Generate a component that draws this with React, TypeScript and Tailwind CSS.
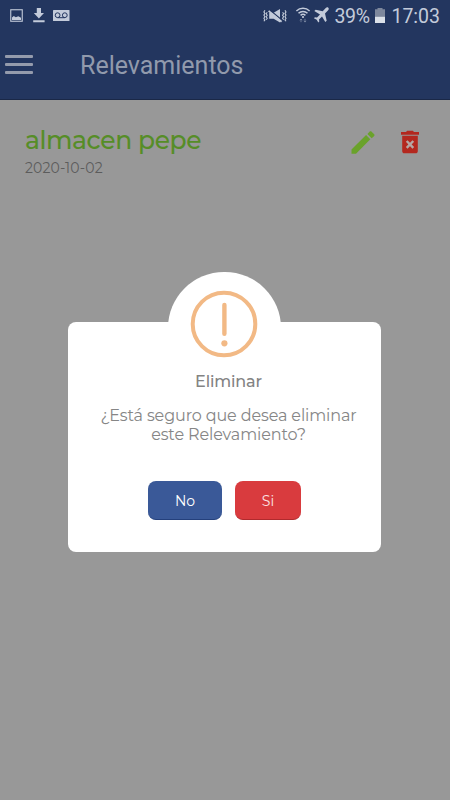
import { useState } from 'react'

const MONT = "font-['Montserrat','Inter',sans-serif]"

interface Relevamiento {
  id: number
  nombre: string
  fecha: string
}

const RELEVAMIENTOS: Relevamiento[] = [{ id: 1, nombre: 'almacen pepe', fecha: '2020-10-02' }]

function StatusBar() {
  return (
    <div className="flex h-[31px] items-center justify-between pl-[10px] pr-[10px] text-[#c3cbda]">
      <div className="flex items-center gap-[9px]">
        {/* captura guardada */}
        <svg width="13" height="13" viewBox="0 0 13 13" fill="none">
          <rect x="0.75" y="0.75" width="11.5" height="11.5" stroke="currentColor" strokeWidth="1.1" />
          <path d="M2 11V8.4L3.8 7l2 1.3L8.3 7.2l2.7 1.6V11z" fill="currentColor" />
        </svg>
        <svg width="12" height="15" viewBox="0 0 12 15" fill="currentColor" className="ml-px">
          <path d="M3.8 0h4.2v5h3L5.9 10.4.8 5h3zM0.2 12.3h11.4v1.9H0.2z" />
        </svg>
        {/* buzón de voz */}
        <svg width="17" height="11" viewBox="0 0 17 11" fill="none" className="-ml-px">
          <rect width="16.5" height="11" rx="0.6" fill="currentColor" />
          <circle cx="4.6" cy="5.2" r="2.4" stroke="#23365f" strokeWidth="1" />
          <circle cx="11.8" cy="5.2" r="2.4" stroke="#23365f" strokeWidth="1" />
          <path d="M4.6 7.7h7.2" stroke="#23365f" strokeWidth="1" />
        </svg>
      </div>

      <div className="flex items-center font-['Roboto',sans-serif]">
        {/* silencio con vibración */}
        <svg width="24" height="16" viewBox="0 0 24 16" fill="none">
          <path d="M1.9 2.2L.9 3.9l1 1.6-1 1.6 1 1.6-1 1.6 1 1.6-1 1.4M4.2 4.2l-1 1.5 1 1.5-1 1.5 1 1.5-1 1.5M22 2.2l1 1.7-1 1.6 1 1.6-1 1.6 1 1.6-1 1.6 1 1.4M19.6 4.2l1 1.5-1 1.5 1 1.5-1 1.5 1 1.5" stroke="currentColor" strokeWidth="1.1" />
          <path d="M6.2 4.8h4.4L17 1v13.6l-6.4-3.8H6.2z" fill="currentColor" />
          <path d="M6.5 1.8L18.5 11.8" stroke="#23365f" strokeWidth="1.3" />
          <path d="M5.6 2.9L18.6 13.8" stroke="currentColor" strokeWidth="1.8" />
        </svg>
        <svg width="16" height="17" viewBox="0 0 16 17" fill="none" stroke="currentColor" className="-mt-[2px] ml-[8px]">
          <path d="M1.4 5a9.5 9.5 0 0 1 13.2 0M3.5 7.3a6.4 6.4 0 0 1 9 0M5.6 9.4a3.4 3.4 0 0 1 4.8 0" strokeWidth="1.5" />
          <circle cx="8" cy="11" r="1.1" fill="currentColor" stroke="none" />
          <path d="M6 16.2v-3M4.8 14.2L6 13l1.2 1.2M10 12.8v3M8.8 15l1.2 1.1 1.2-1.1" strokeWidth="0.9" opacity="0.5" />
        </svg>
        {/* modo avión */}
        <svg width="16" height="16" viewBox="0 0 16 16" fill="currentColor" className="-mt-px ml-[2px]">
          <path d="M15.3.7c.8.8.5 2-.4 2.9L12 6.5l1.7 7.2-1.4 1.4-3.3-5.6-3 3 .3 2.1-1 1-1.6-2.8L.9 11.2l1-1 2.1.3 3-3L1.3 4.1l1.4-1.4 7 1.5 2.8-2.9c.9-.9 2-1.3 2.8-.6z" />
        </svg>
        <span className="ml-[5px] mt-[2px] w-[36px] whitespace-nowrap text-[19.5px] leading-none tracking-[-0.3px]">39%</span>
        <svg width="10" height="15" viewBox="0 0 10 15" className="-mt-px ml-[5px]">
          <path d="M2.5 0h5v1.2H10V9H0V1.2h2.5z" fill="#7d879c" />
          <path d="M0 8.8h10V15H0z" fill="#dbe0e8" />
        </svg>
        <span className="ml-[6px] mt-[2px] whitespace-nowrap text-[19.5px] leading-none">17:03</span>
      </div>
    </div>
  )
}

function Header() {
  return (
    <header className="h-[100px] border-b border-[#1a2847] bg-[#23365f]">
      <StatusBar />
      <div className="flex h-[68px] items-center pl-[5px]">
        <button type="button" aria-label="Menú" className="-mt-px flex w-[28px] flex-col gap-[5px]">
          <span className="h-[3px] rounded-[1px] bg-[#949bac]" />
          <span className="h-[3px] rounded-[1px] bg-[#949bac]" />
          <span className="h-[3px] rounded-[1px] bg-[#949bac]" />
        </button>
        <h1 className="ml-[47px] mt-px font-['Roboto',sans-serif] text-[25px] leading-none text-[#919aac]">Relevamientos</h1>
      </div>
    </header>
  )
}

function RelevamientoRow({ item, onDelete }: { item: Relevamiento; onDelete: () => void }) {
  return (
    <li className="flex items-start justify-between pl-[25px] pr-[30px] pt-[24px]">
      <div className={MONT}>
        <p className="text-[25px] font-medium leading-[32px] tracking-[-0.42px] text-[#568d27]">{item.nombre}</p>
        <p className="mt-[3px] text-[14px] leading-[18px] tracking-[0.1px] text-[#5c5c5c]">{item.fecha}</p>
      </div>
      <div className="flex items-center gap-[25px] pt-[6px]">
        <button type="button" aria-label="Editar">
          <svg width="24" height="25" viewBox="0 0 24 25" fill="#6aa22b">
            <path d="M0.5 19.4L15.1 5l4.2 4.2L5 23.8H0.5z" />
            <path d="M16.4 3.9L18.7 1.6c.6-.5 1.2-.5 1.7 0l2.8 2.6c.5.5.5 1.1 0 1.7L20.7 8.2z" />
          </svg>
        </button>
        <button type="button" aria-label="Eliminar" onClick={onDelete} className="-mt-px">
          <svg width="20" height="24" viewBox="0 0 20 24">
            <path d="M1 2h5L7.2.7h5.6L14 2h5v2.7H1z" fill="#b3281f" />
            <path d="M2.2 5.7h15.6v15.2c0 1.3-.9 2.4-2.2 2.4H4.4c-1.3 0-2.2-1.1-2.2-2.4z" fill="#b3281f" />
            <path d="M6.7 11l6.6 6.8M13.3 11l-6.6 6.8" stroke="#b5a7a5" strokeWidth="2.4" />
          </svg>
        </button>
      </div>
    </li>
  )
}

function ConfirmDialog({ onClose }: { onClose: () => void }) {
  return (
    <div
      role="alertdialog"
      className={`${MONT} absolute left-[68px] top-[322px] h-[230px] w-[313px] rounded-[8px] bg-white text-center`}
    >
      {/* Semicírculo que sobresale del cuadro, con el icono de aviso */}
      <div className="absolute left-[100px] top-[-50px] flex h-[112px] w-[113px] items-start justify-center rounded-full bg-white pr-px pt-[18px]">
        <svg width="68" height="68" viewBox="0 0 68 68" fill="none" stroke="#f2b985">
          <circle cx="34" cy="34" r="31.3" strokeWidth="4" />
          <path d="M34.4 15v28.8" strokeWidth="4.4" strokeLinecap="round" />
          <circle cx="34.4" cy="53.3" r="3.1" fill="#f2b985" stroke="none" />
        </svg>
      </div>
      <div className="relative flex flex-col items-center pt-[50px]">
        <h2 className="pl-[8px] text-[16px] font-medium leading-[20px] tracking-[-0.15px] text-[#838383]">Eliminar</h2>
        <p className="mt-[14px] whitespace-nowrap pl-[8px] text-[16px] leading-[19px] tracking-[-0.12px] text-[#868686]">
          ¿Está seguro que desea eliminar
          <br />
          este Relevamiento?
        </p>
        <div className="mt-[37px] flex gap-[13px] text-[14px] text-white">
          <button type="button" onClick={onClose} className="h-[39px] w-[74px] rounded-[8px] border-b border-[#24407c] bg-[#3a5998] pt-[2px]">
            No
          </button>
          <button type="button" onClick={onClose} className="h-[39px] w-[66px] rounded-[8px] border-b border-[#b02a2d] bg-[#d93b3e] pt-[2px] text-[#fbe3e3]">
            Si
          </button>
        </div>
      </div>
    </div>
  )
}

export default function App() {
  const [open, setOpen] = useState(true)

  return (
    <div className="relative h-[800px] w-[450px] overflow-hidden bg-[#989898]">
      <Header />
      <ul>
        {RELEVAMIENTOS.map(item => (
          <RelevamientoRow key={item.id} item={item} onDelete={() => setOpen(true)} />
        ))}
      </ul>
      {open && <ConfirmDialog onClose={() => setOpen(false)} />}
    </div>
  )
}
